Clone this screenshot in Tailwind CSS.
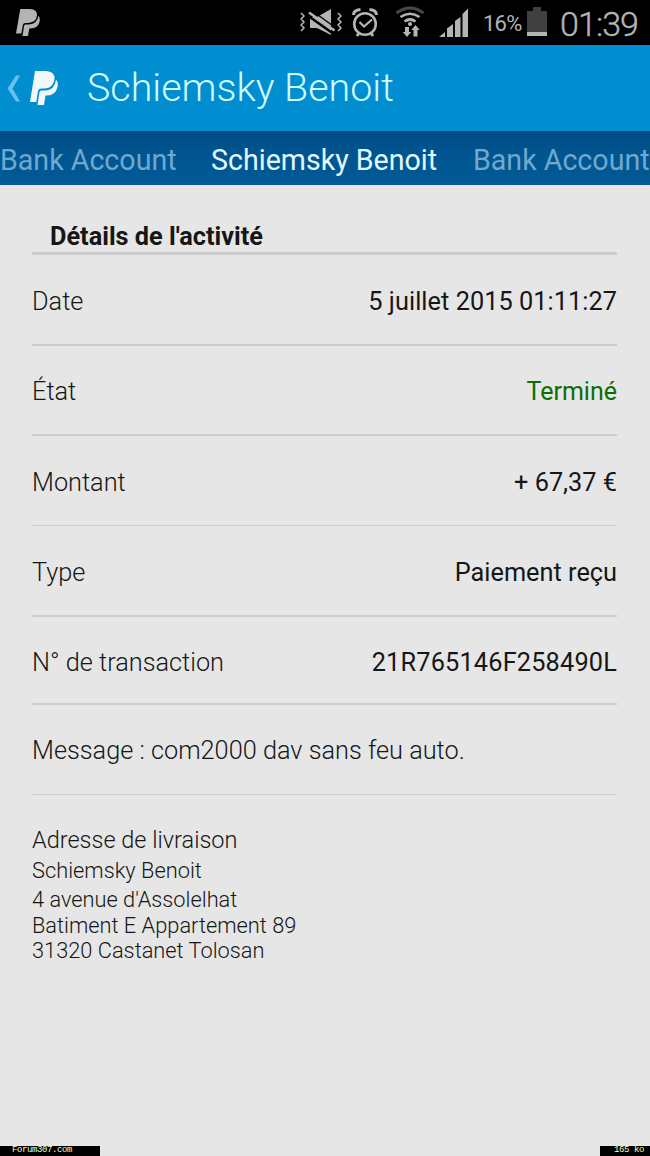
<!DOCTYPE html>
<html lang="fr">
<head>
<meta charset="utf-8">
<title>Schiemsky Benoit</title>
<script src="https://cdn.jsdelivr.net/npm/@tailwindcss/browser@4"></script>
</head>
<body class="w-[650px] h-[1156px] overflow-hidden bg-[#e6e6e6] text-[#161616] font-['Roboto','Noto_Sans',sans-serif] flex flex-col whitespace-nowrap">
<header class="shrink-0">
  <div class="h-[45px] bg-black flex items-start justify-between text-[#b4b4b4]">
    <svg class="mt-[9px] ml-[16px]" width="24" height="27" viewBox="0 0 28 34" preserveAspectRatio="none" fill="currentColor"><path d="M5 0H16Q25 0.500 24.500 8Q23.500 17.500 14 17.500H11Q8.500 17.500 8 20L6.300 31H0Z"/><path d="M26 8.500Q28.500 11.500 27.500 16Q25.500 24.500 17 24.500H15.500L14 34H7.500L9.500 21Q9.800 19.500 11.500 19.500H15Q25 19 26 8.500Z"/></svg>
    <div class="flex items-start">
      <svg width="178" height="45" viewBox="300 0 178 45" fill="none" stroke="currentColor">
        <path d="M301 13l3 3-3 3 3 3-3 3 3 3-3 3M338 13l3 3-3 3 3 3-3 3 3 3-3 3" stroke-width="1.500"/>
        <path d="M310 17H317L331 9V35L317 28H310Z" fill="currentColor" stroke="none"/>
        <path d="M307 15L333 33.500" stroke="#000" stroke-width="2.500"/><path d="M311 10L336 28" stroke="#000" stroke-width="1.500"/><path d="M309 12.500L334.500 30.500" stroke-width="2.600"/>
        <circle cx="365" cy="24" r="10.800" stroke-width="2.600"/><path d="M359.500 22l4.500 4.500 8-7" stroke-width="2.200"/><path d="M353.500 15q0-5 7-5.500M376.500 15q0-5-7-5.500" stroke-width="3"/><path d="M359 33l-2 3M371 33l2 3" stroke-width="3"/>
        <path d="M396.500 13Q410 3 423.500 13" stroke="#484848" stroke-width="3"/><path d="M400.500 17Q410 10.500 419.500 17M404.500 21.500Q410 17.500 415.500 21.500" stroke-width="2.700"/><circle cx="410" cy="24" r="2" fill="currentColor" stroke="none"/>
        <path d="M405 27h4v5h2.200L407 37l-4.200-5H405ZM413.500 36.500h4V30h2.200l-4.200-5-4.200 5h2.200Z" fill="currentColor" stroke="none"/>
        <path d="M439 37L445 32V37ZM447 37V28.500L453 24V37ZM455 37V21L460.500 17V37ZM462.500 37V14L468 8.500V37Z" fill="currentColor" stroke="none"/>
      </svg>
      <span class="ml-[5px] mt-[9px] w-[40px] text-[22px] leading-[30px] tracking-[-0.8px]">16%</span>
      <svg class="ml-[4px] mt-[7px]" width="20" height="29" viewBox="0 0 20 29"><path d="M0 4H6V0H14V4H20V29H0Z" fill="#404040"/><path d="M0 25H20V29H0Z" fill="#b4b4b4"/></svg>
      <span class="ml-[13px] mt-[4px] w-[90px] text-[34px] leading-[40px] font-light tracking-[-0.9px] [-webkit-text-stroke:0.4px_#b4b4b4]">01:39</span>
    </div>
  </div>
  <div class="h-[86px] bg-[#008ed1] flex items-center">
    <svg class="ml-[7px]" width="13" height="27" viewBox="0 0 13 27"><path d="M9 0.500H13L5.500 13.500L13 26.500H9L0.500 13.500Z" fill="#69c0ec"/></svg>
    <svg class="ml-[10px]" width="28" height="34" viewBox="0 0 28 34" fill="#f2f7fa"><path d="M5 0H16Q25 0.500 24.500 8Q23.500 17.500 14 17.500H11Q8.500 17.500 8 20L6.300 31H0Z"/><path d="M26 8.500Q28.500 11.500 27.500 16Q25.500 24.500 17 24.500H15.500L14 34H7.500L9.500 21Q9.800 19.500 11.500 19.500H15Q25 19 26 8.500Z"/></svg>
    <h1 class="ml-[29px] pb-px text-[39.400px] font-light text-[#d0fbff]">Schiemsky Benoit</h1>
  </div>
  <nav class="h-[54px] bg-linear-to-b from-[#004b82] via-[#005590] via-40% to-[#005a96] flex items-center text-[28.600px] text-[#6fa9cf] pt-[4px]">
    <span class="w-[211px] shrink-0">Bank Account</span>
    <span class="w-[262px] shrink-0 text-[#e2f7ff]">Schiemsky Benoit</span>
    <span>Bank Account</span>
  </nav>
</header>
<main class="grow px-[32px] text-[25.300px] w-[649px]">
  <h2 class="h-[70px] border-b-[3px] border-[#cdcdcd] pl-[18px] pt-[34px] leading-[36px] font-bold">Détails de l'activité</h2>
  <div class="h-[91px] border-b-2 border-[#cdcdcd] flex items-center justify-between pt-[4px]"><span class="font-light">Date</span><span class="tracking-[0.05px]">5 juillet 2015 01:11:27</span></div>
  <div class="h-[90px] border-b-2 border-[#cdcdcd] flex items-center justify-between pt-[4px]"><span class="font-light">État</span><span class="text-[25px] text-[#0b6e05]">Terminé</span></div>
  <div class="h-[90px] border-b border-[#cdcdcd] flex items-center justify-between pt-[4px]"><span class="font-light">Montant</span><span>+ 67,37 €</span></div>
  <div class="h-[91px] border-b-2 border-[#cdcdcd] flex items-center justify-between pt-[4px]"><span class="font-light">Type</span><span>Paiement reçu</span></div>
  <div class="h-[88px] border-b-2 border-[#cdcdcd] flex items-center justify-between pt-[5px]"><span class="font-light">N° de transaction</span><span class="tracking-[0.18px]">21R765146F258490L</span></div>
  <div class="h-[90px] border-b border-[#cdcdcd] flex items-center pt-[3px]"><span class="font-light">Message : com2000 dav sans feu auto.</span></div>
  <section class="pt-[29px] font-light">
    <h3 class="text-[23.500px] leading-[32px]">Adresse de livraison</h3>
    <p class="text-[21.800px] leading-[30px]">Schiemsky Benoit</p>
    <address class="not-italic text-[21.800px] leading-[25.500px] pt-px">4 avenue d'Assolelhat<br>Batiment E Appartement 89<br>31320 Castanet Tolosan</address>
  </section>
</main>
<footer class="h-[10px] shrink-0 flex justify-between text-[9px] leading-[9px] tracking-[-0.4px] text-[#ffffc8] font-['Liberation_Mono',monospace]">
  <span class="w-[100px] bg-black pl-[12px]">Forum307.com</span>
  <span class="w-[50px] bg-black pl-[14px]">165 ko</span>
</footer>
</body>
</html>
